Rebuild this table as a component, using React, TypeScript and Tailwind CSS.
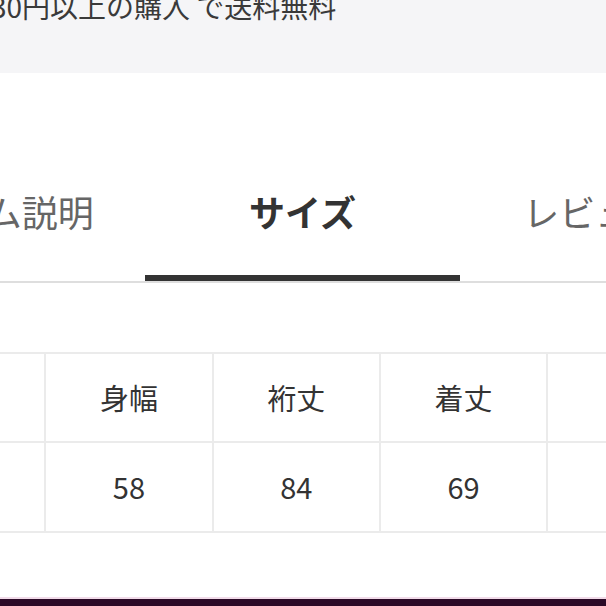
const font = { fontFamily: '"Noto Sans CJK JP", "Noto Sans", sans-serif' };

const tabs = [
  { label: "アイテム説明", active: false },
  { label: "サイズ", active: true },
  { label: "レビュー(5)", active: false },
];

const headers = ["", "身幅", "裄丈", "着丈", ""];
const values = ["", "58", "84", "69", ""];

export default function App() {
  return (
    <div
      className="w-[606px] h-[606px] overflow-hidden bg-white flex flex-col"
      style={font}
    >
      {/* Shipping notice */}
      <div className="h-[73px] shrink-0 bg-[#f5f5f7] overflow-hidden">
        <div className="ml-[-9px] mt-[-8px] text-[28px] leading-none text-[#3a3a3a] whitespace-nowrap">
          30円以上の購入 で送料無料
        </div>
      </div>

      {/* Tabs */}
      <div className="shrink-0 border-b-2 border-[#dedede] overflow-hidden">
        <div className="flex ml-[-170px] w-max">
          {tabs.map((t) => (
            <div key={t.label} className="w-[315px] flex flex-col items-center">
              <div
                className={`pt-[120px] text-[36px] leading-none whitespace-nowrap ${
                  t.active ? "font-bold text-[#333]" : "text-[#666]"
                }`}
              >
                {t.label}
              </div>
              <div
                className={`mt-[46px] h-[6px] w-full ${
                  t.active ? "bg-[#333]" : "bg-transparent"
                }`}
              />
            </div>
          ))}
        </div>
      </div>

      {/* Size table */}
      <div className="mt-[69px] overflow-hidden">
        <div className="ml-[-123px] w-max grid grid-cols-[repeat(5,165.3px)] gap-[2px] bg-[#ebebeb] p-[2px]">
          {headers.map((h, i) => (
            <div
              key={"h" + i}
              className="h-[87px] bg-white flex items-center justify-center text-[29px] text-[#333]"
            >
              {h}
            </div>
          ))}
          {values.map((v, i) => (
            <div
              key={"v" + i}
              className="h-[88px] bg-white flex items-center justify-center text-[29px] text-[#333]"
            >
              {v}
            </div>
          ))}
        </div>
      </div>

      {/* Bottom bar */}
      <div className="mt-auto shrink-0">
        <div className="h-[2px] bg-[#f1dbe9]" />
        <div className="h-[7px] bg-[#2b0a27]" />
      </div>
    </div>
  );
}
